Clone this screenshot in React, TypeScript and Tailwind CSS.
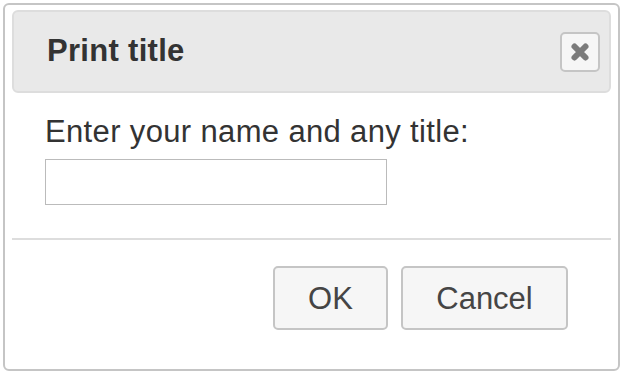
import React from "react";

export default function App() {
  return (
    <div
      className="w-[622px] h-[374px] bg-white pt-[3px] pl-[3px]"
      style={{ fontFamily: '"Liberation Sans", Arial, Helvetica, sans-serif' }}
    >
      <div className="w-[617px] h-[368px] border-2 border-[#c5c5c5] rounded-[6px] px-[7px] pt-[5px] flex flex-col">
        <div className="h-[83px] shrink-0 border-2 border-[#dddddd] bg-[#e9e9e9] rounded-[6px] flex items-center justify-between pl-[33px] pr-[9px]">
          <span className="text-[31px] font-bold text-[#333333] leading-none tracking-[0.3px] mb-[2px]">
            Print title
          </span>
          <button className="w-[40px] h-[40px] border-2 border-[#c5c5c5] bg-[#f6f6f6] rounded-[5px] flex items-center justify-center">
            <svg width="20" height="20" viewBox="0 0 20 20">
              <path
                d="M4.5 4.5 L15.5 15.5 M15.5 4.5 L4.5 15.5"
                stroke="#7b7b7b"
                strokeWidth="6"
                strokeLinecap="round"
                fill="none"
              />
            </svg>
          </button>
        </div>
        <div className="pt-[21px] pl-[33px]">
          <div className="text-[31px] leading-[36px] text-[#333333] tracking-[0.35px]">
            Enter your name and any title:
          </div>
          <input
            type="text"
            className="mt-[9px] block w-[342px] h-[46px] border border-[#bbbbbb] bg-white outline-none"
          />
        </div>
        <div className="mt-[33px] h-[2px] shrink-0 bg-[#dddddd]" />
        <div className="flex justify-end gap-[13px] pr-[43px] mt-[26px]">
          <button className="w-[115px] h-[64px] border-2 border-[#c5c5c5] bg-[#f6f6f6] rounded-[5px] text-[31px] leading-none text-[#454545] flex items-center justify-center">
            OK
          </button>
          <button className="w-[167px] h-[64px] border-2 border-[#c5c5c5] bg-[#f6f6f6] rounded-[5px] text-[31px] leading-none text-[#454545] flex items-center justify-center">
            Cancel
          </button>
        </div>
      </div>
    </div>
  );
}
